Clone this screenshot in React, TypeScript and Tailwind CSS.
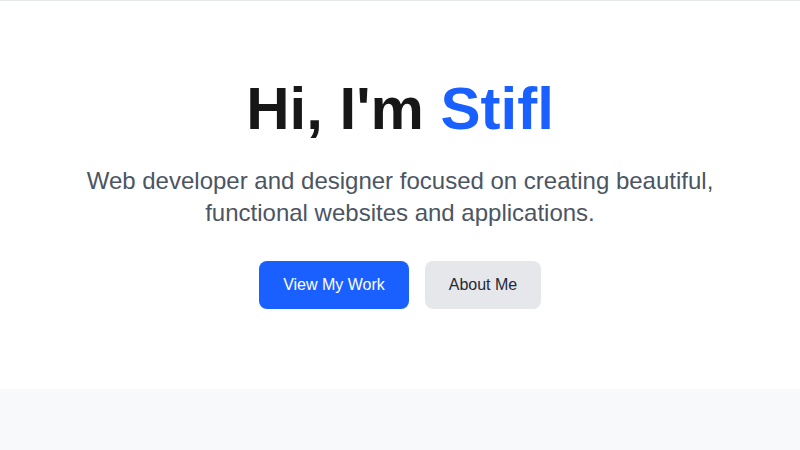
import React from 'react';

export default function App() {
  return (
    <div className="min-h-screen bg-white font-['Liberation_Sans',Arial,sans-serif]">
      {/* Hero */}
      <section className="border-t border-gray-200 bg-white px-4 pt-[78px] pb-[80px]">
        <div className="mx-auto max-w-3xl text-center">
          <h1 className="text-6xl font-bold leading-none text-[#171717]">
            Hi, I'm <span className="text-[#1a5fff]">Stifl</span>
          </h1>
          <p className="mx-auto mt-[26px] max-w-2xl text-2xl leading-8 text-[#4b5563]">
            Web developer and designer focused on creating beautiful, functional websites and applications.
          </p>
          <div className="mt-8 flex justify-center gap-4">
            <a
              href="#projects"
              className="flex h-12 w-[150px] items-center justify-center rounded-lg bg-[#1a5fff] text-base text-white"
            >
              View My Work
            </a>
            <a
              href="#about"
              className="flex h-12 w-[116px] items-center justify-center rounded-lg bg-[#e5e7eb] text-base text-[#1f2937]"
            >
              About Me
            </a>
          </div>
        </div>
      </section>

      {/* Next section */}
      <section className="h-[200px] bg-[#f8f9fb]" />
    </div>
  );
}
